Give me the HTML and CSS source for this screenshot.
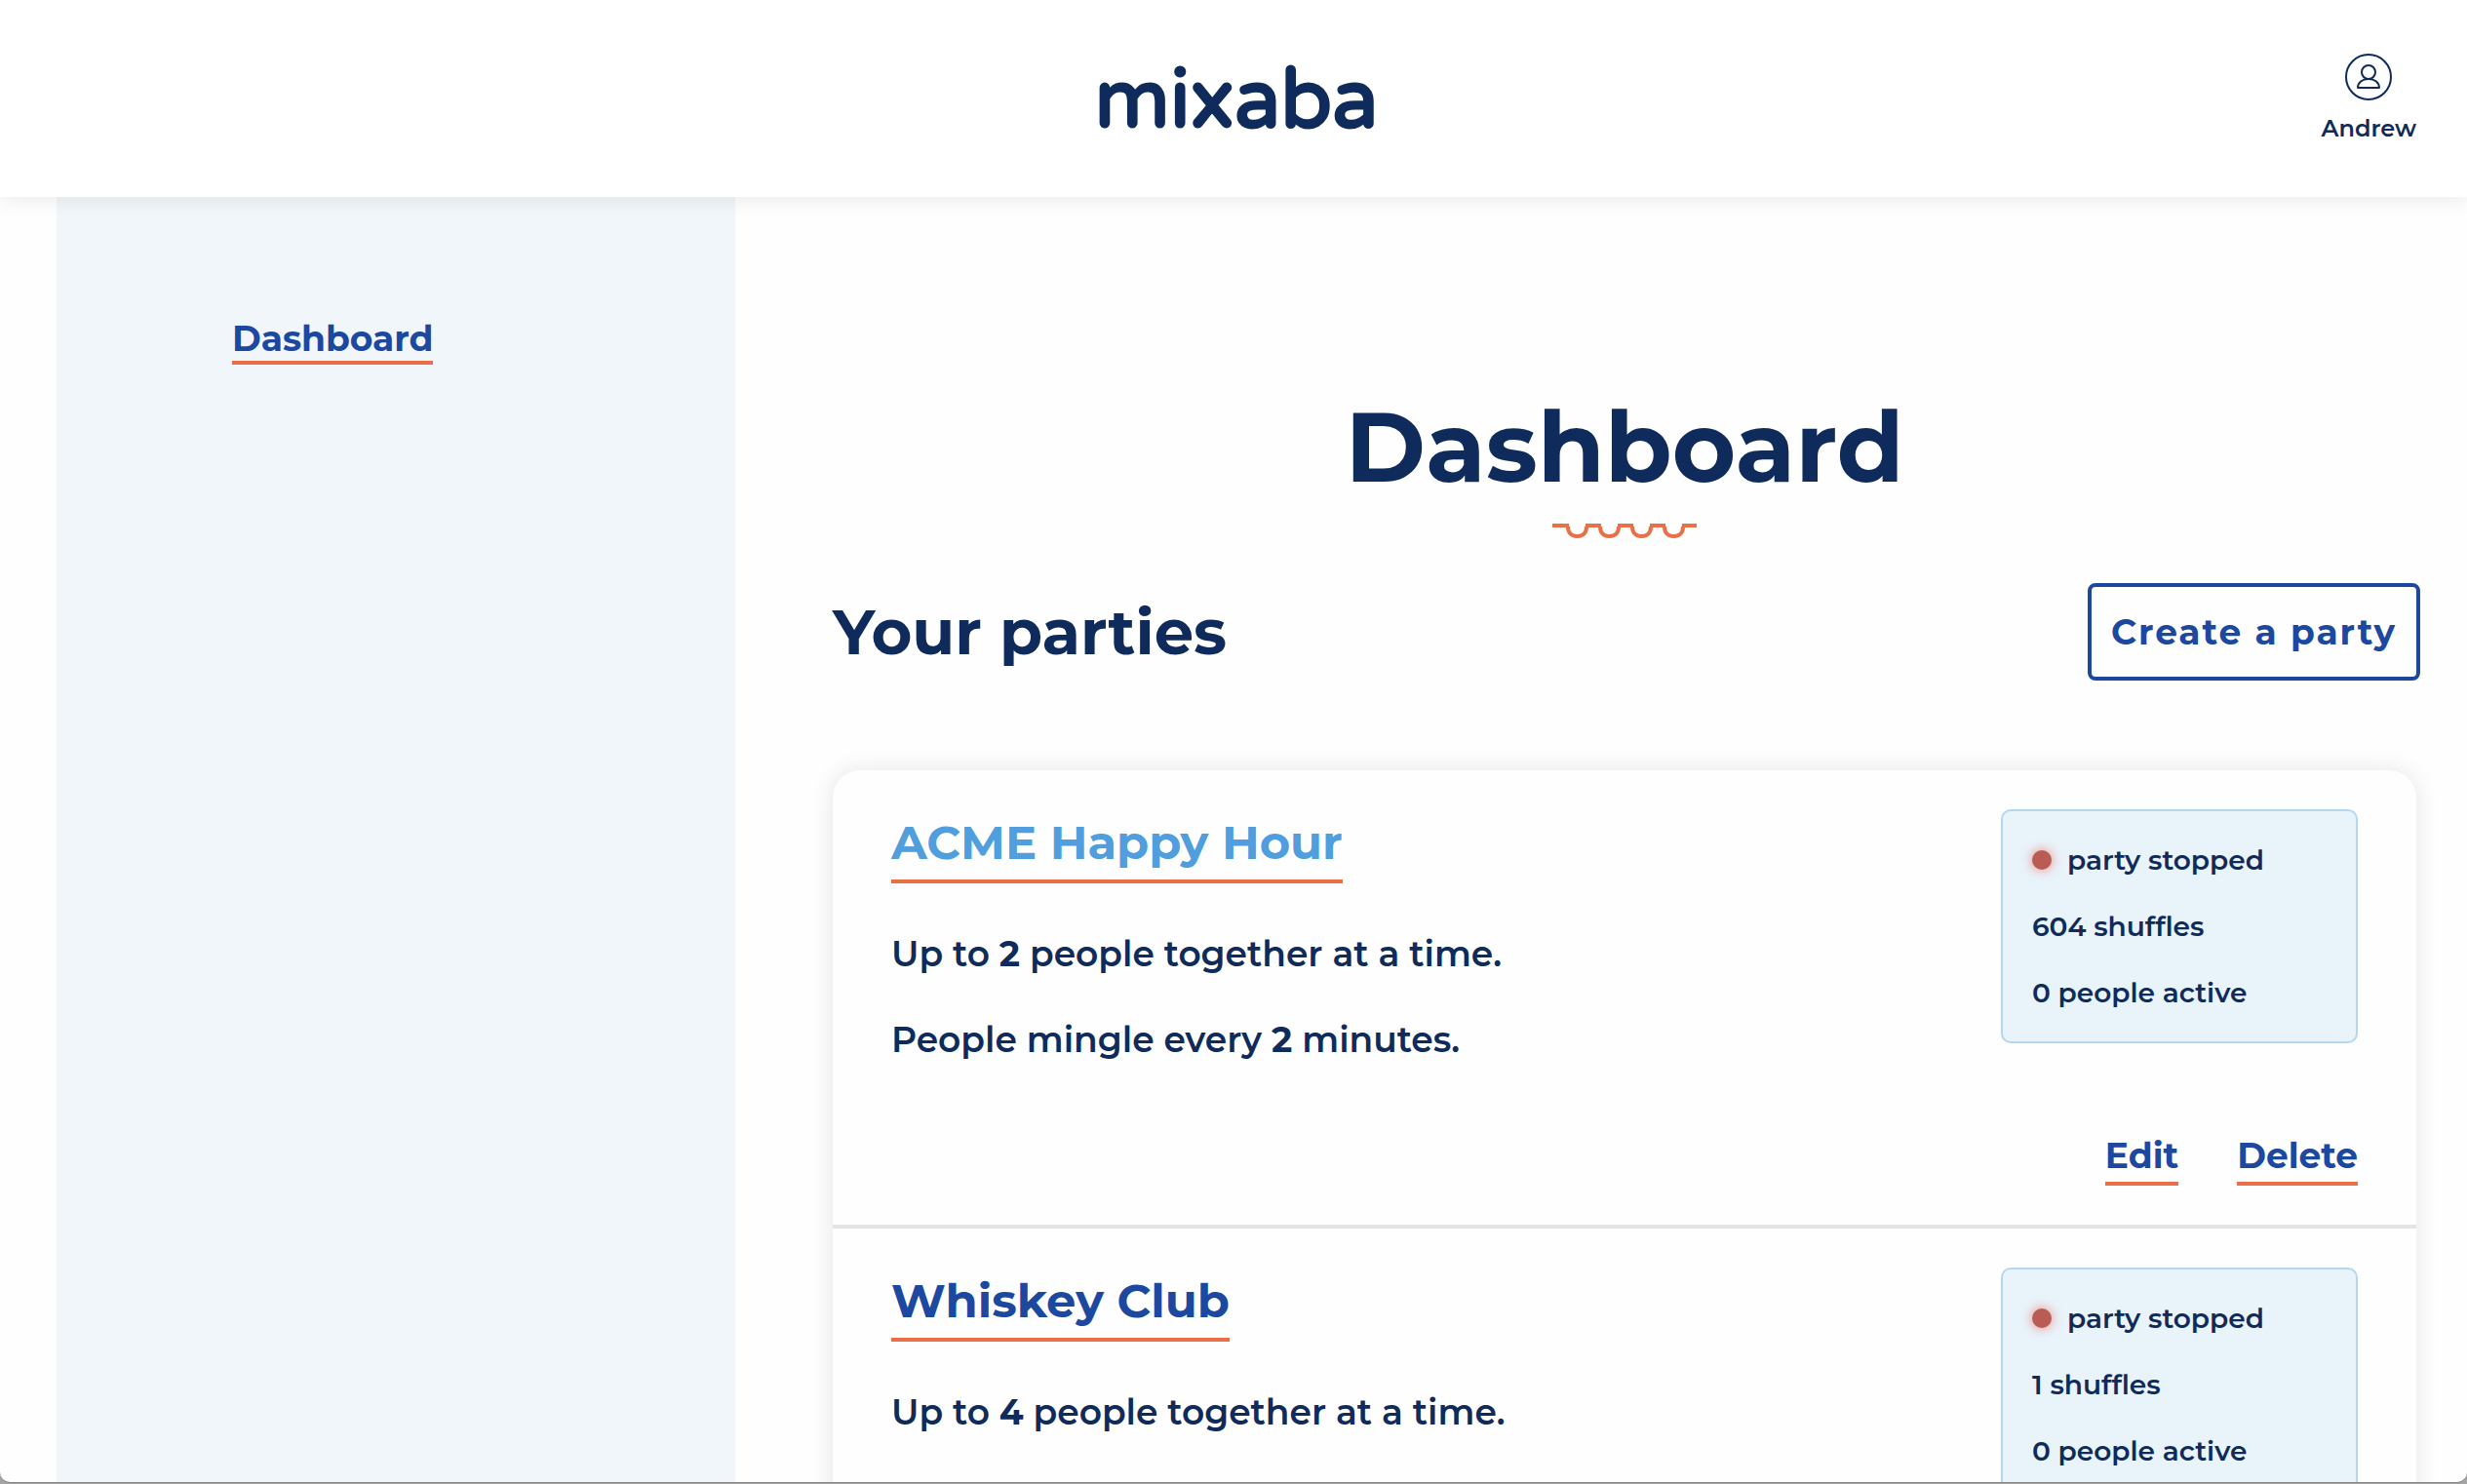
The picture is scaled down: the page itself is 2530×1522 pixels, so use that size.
FILE: index.html
```html
<!DOCTYPE html>
<html lang="en">
<head>
  <meta charset="utf-8">
  <meta name="viewport" content="width=device-width, initial-scale=1">
  <title>mixaba – Dashboard</title>
  <link rel="stylesheet" href="styles.css">
</head>
<body>
  <div class="window">
    <header class="topbar">
      <a class="logo" href="#" aria-label="mixaba">
        <svg width="320" height="110" viewBox="0 0 320 110"><text class="logo-text" x="160" y="84" text-anchor="middle">mixaba</text></svg>
      </a>
      <a class="user" href="#">
        <svg class="user-icon" width="50" height="50" viewBox="0 0 50 50" fill="none" stroke="currentColor" stroke-width="2" aria-hidden="true">
          <circle cx="25" cy="25" r="23"/>
          <circle cx="25" cy="20" r="7"/>
          <path d="M14 36c0-5.500 4.500-9 11-9s11 3.500 11 9z" stroke-linejoin="round"/>
        </svg>
        <span>Andrew</span>
      </a>
    </header>
    <div class="layout">
      <nav class="sidebar"><a class="link" href="#">Dashboard</a></nav>
      <main class="main">
        <h1>Dashboard</h1>
        <svg class="squiggle" width="150" height="16" viewBox="0 0 150 16" fill="none" stroke="currentColor" stroke-width="4" aria-hidden="true">
          <path d="M1 3H18M17 4C17 10 20 14 26.500 14S36 10 36 4M35 3H51M50 4C50 10 53 14 59.500 14S69 10 69 4M68 3H84M83 4C83 10 86 14 92.500 14S102 10 102 4M101 3H117M116 4C116 10 119 14 125.500 14S135 10 135 4M134 3H149"/>
        </svg>
        <div class="section-head">
          <h2>Your parties</h2>
          <button class="create" type="button">Create a party</button>
        </div>
        <section class="card">
          <article class="party">
            <div class="details">
              <h3><a class="link link-hover" href="#">ACME Happy Hour</a></h3>
              <p>Up to <strong>2</strong> people together at a time.</p>
              <p>People mingle every <strong>2</strong> minutes.</p>
            </div>
            <div class="side">
              <ul class="status">
                <li><span class="dot"></span>party stopped</li>
                <li>604 shuffles</li>
                <li>0 people active</li>
              </ul>
              <div class="actions"><a class="link" href="#">Edit</a><a class="link" href="#">Delete</a></div>
            </div>
          </article>
          <article class="party">
            <div class="details">
              <h3><a class="link" href="#">Whiskey Club</a></h3>
              <p>Up to <strong>4</strong> people together at a time.</p>
            </div>
            <div class="side">
              <ul class="status">
                <li><span class="dot"></span>party stopped</li>
                <li>1 shuffles</li>
                <li>0 people active</li>
              </ul>
            </div>
          </article>
        </section>
      </main>
    </div>
  </div>
</body>
</html>
```
FILE: styles.css
```css
:root {
  --navy: #0f2b5b;
  --blue: #1c48a0;
  --sky: #509edd;
  --coral: #ea6e46;
}

* { box-sizing: border-box; }

body {
  margin: 0;
  height: 100vh;
  overflow: hidden;
  padding-bottom: 2px;
  background: #a5a5a5;
  color: var(--navy);
  font-family: Montserrat, Inter, sans-serif;
  font-weight: 600;
}

h1, h2, h3, p, ul { margin: 0; padding: 0; }

.window {
  height: 100%;
  display: flex;
  flex-direction: column;
  overflow: hidden;
  background: #fefefe;
  border-radius: 0 0 10px 10px;
  box-shadow: 0 1px 0 #858585;
}

.topbar {
  flex: none;
  display: grid;
  grid-template-columns: 1fr auto 1fr;
  align-items: start;
  height: 202px;
  padding: 46px 52px 0 58px;
  background: #fff;
  box-shadow: 0 0 22px rgba(0, 0, 0, 0.1);
  z-index: 1;
}

.logo { grid-column: 2; }
.logo svg { display: block; }

.logo-text {
  font-family: "Varela Round", Nunito, Quicksand, Inter, sans-serif;
  font-size: 84px;
  font-weight: 400;
  fill: var(--navy);
  stroke: var(--navy);
  stroke-width: 3px;
  stroke-linejoin: round;
}

.user {
  justify-self: end;
  display: flex;
  flex-direction: column;
  align-items: center;
  gap: 12px;
  padding-top: 8px;
  color: var(--navy);
  font-size: 24px;
  line-height: 32px;
  text-decoration: none;
}

.layout { flex: 1; display: flex; min-height: 0; }

.sidebar {
  flex: none;
  width: 696px;
  margin-left: 58px;
  padding: 122px 180px;
  background: #f0f6fa;
  font-size: 36px;
}

.main {
  flex: 1;
  padding: 200px 52px 0 100px;
}

.link {
  display: inline-block;
  padding-bottom: 4px;
  border-bottom: 4px solid var(--coral);
  color: var(--blue);
  font-weight: 700;
  line-height: 46px;
  text-decoration: none;
}

.link-hover { color: var(--sky); }

.sidebar .link { padding-bottom: 0; }

h1 { font-size: 100px; font-weight: 700; line-height: 112px; text-align: center; }

.squiggle { display: block; margin: 22px auto 0; color: var(--coral); }

.section-head {
  display: flex;
  align-items: center;
  justify-content: space-between;
  margin-top: 46px;
  margin-right: -4px;
}

h2 { font-size: 64px; font-weight: 700; line-height: 80px; }

.create {
  height: 100px;
  padding: 0 20px;
  border: 4px solid var(--blue);
  border-radius: 8px;
  background: #fefefe;
  color: var(--blue);
  font-family: inherit;
  font-size: 36px;
  font-weight: 700;
  letter-spacing: 2px;
}

.card {
  margin-top: 92px;
  border-radius: 28px;
  background: #fefefe;
  box-shadow: 0 0 24px rgba(0, 0, 0, 0.1);
}

.party {
  display: flex;
  justify-content: space-between;
  padding: 40px 60px;
  border-bottom: 4px solid #e4e4e4;
}

h3 { font-size: 48px; }
h3 .link { line-height: 68px; }

.details p { margin-top: 40px; font-size: 36px; line-height: 48px; }

.details h3 + p { margin-top: 48px; }

strong { font-weight: 700; }

.side { width: 366px; }

.status {
  padding: 16px 30px;
  border: 2px solid #b3d7f0;
  border-radius: 10px;
  background: #e8f3fa;
  list-style: none;
  font-size: 28px;
}

.status li { display: flex; align-items: center; gap: 16px; height: 68px; }

.dot {
  width: 20px;
  height: 20px;
  border-radius: 50%;
  background: #b85c54;
  box-shadow: 0 0 12px #f0827a;
}

.actions {
  display: flex;
  justify-content: flex-end;
  gap: 60px;
  margin-top: 92px;
  font-size: 36px;
}
```
